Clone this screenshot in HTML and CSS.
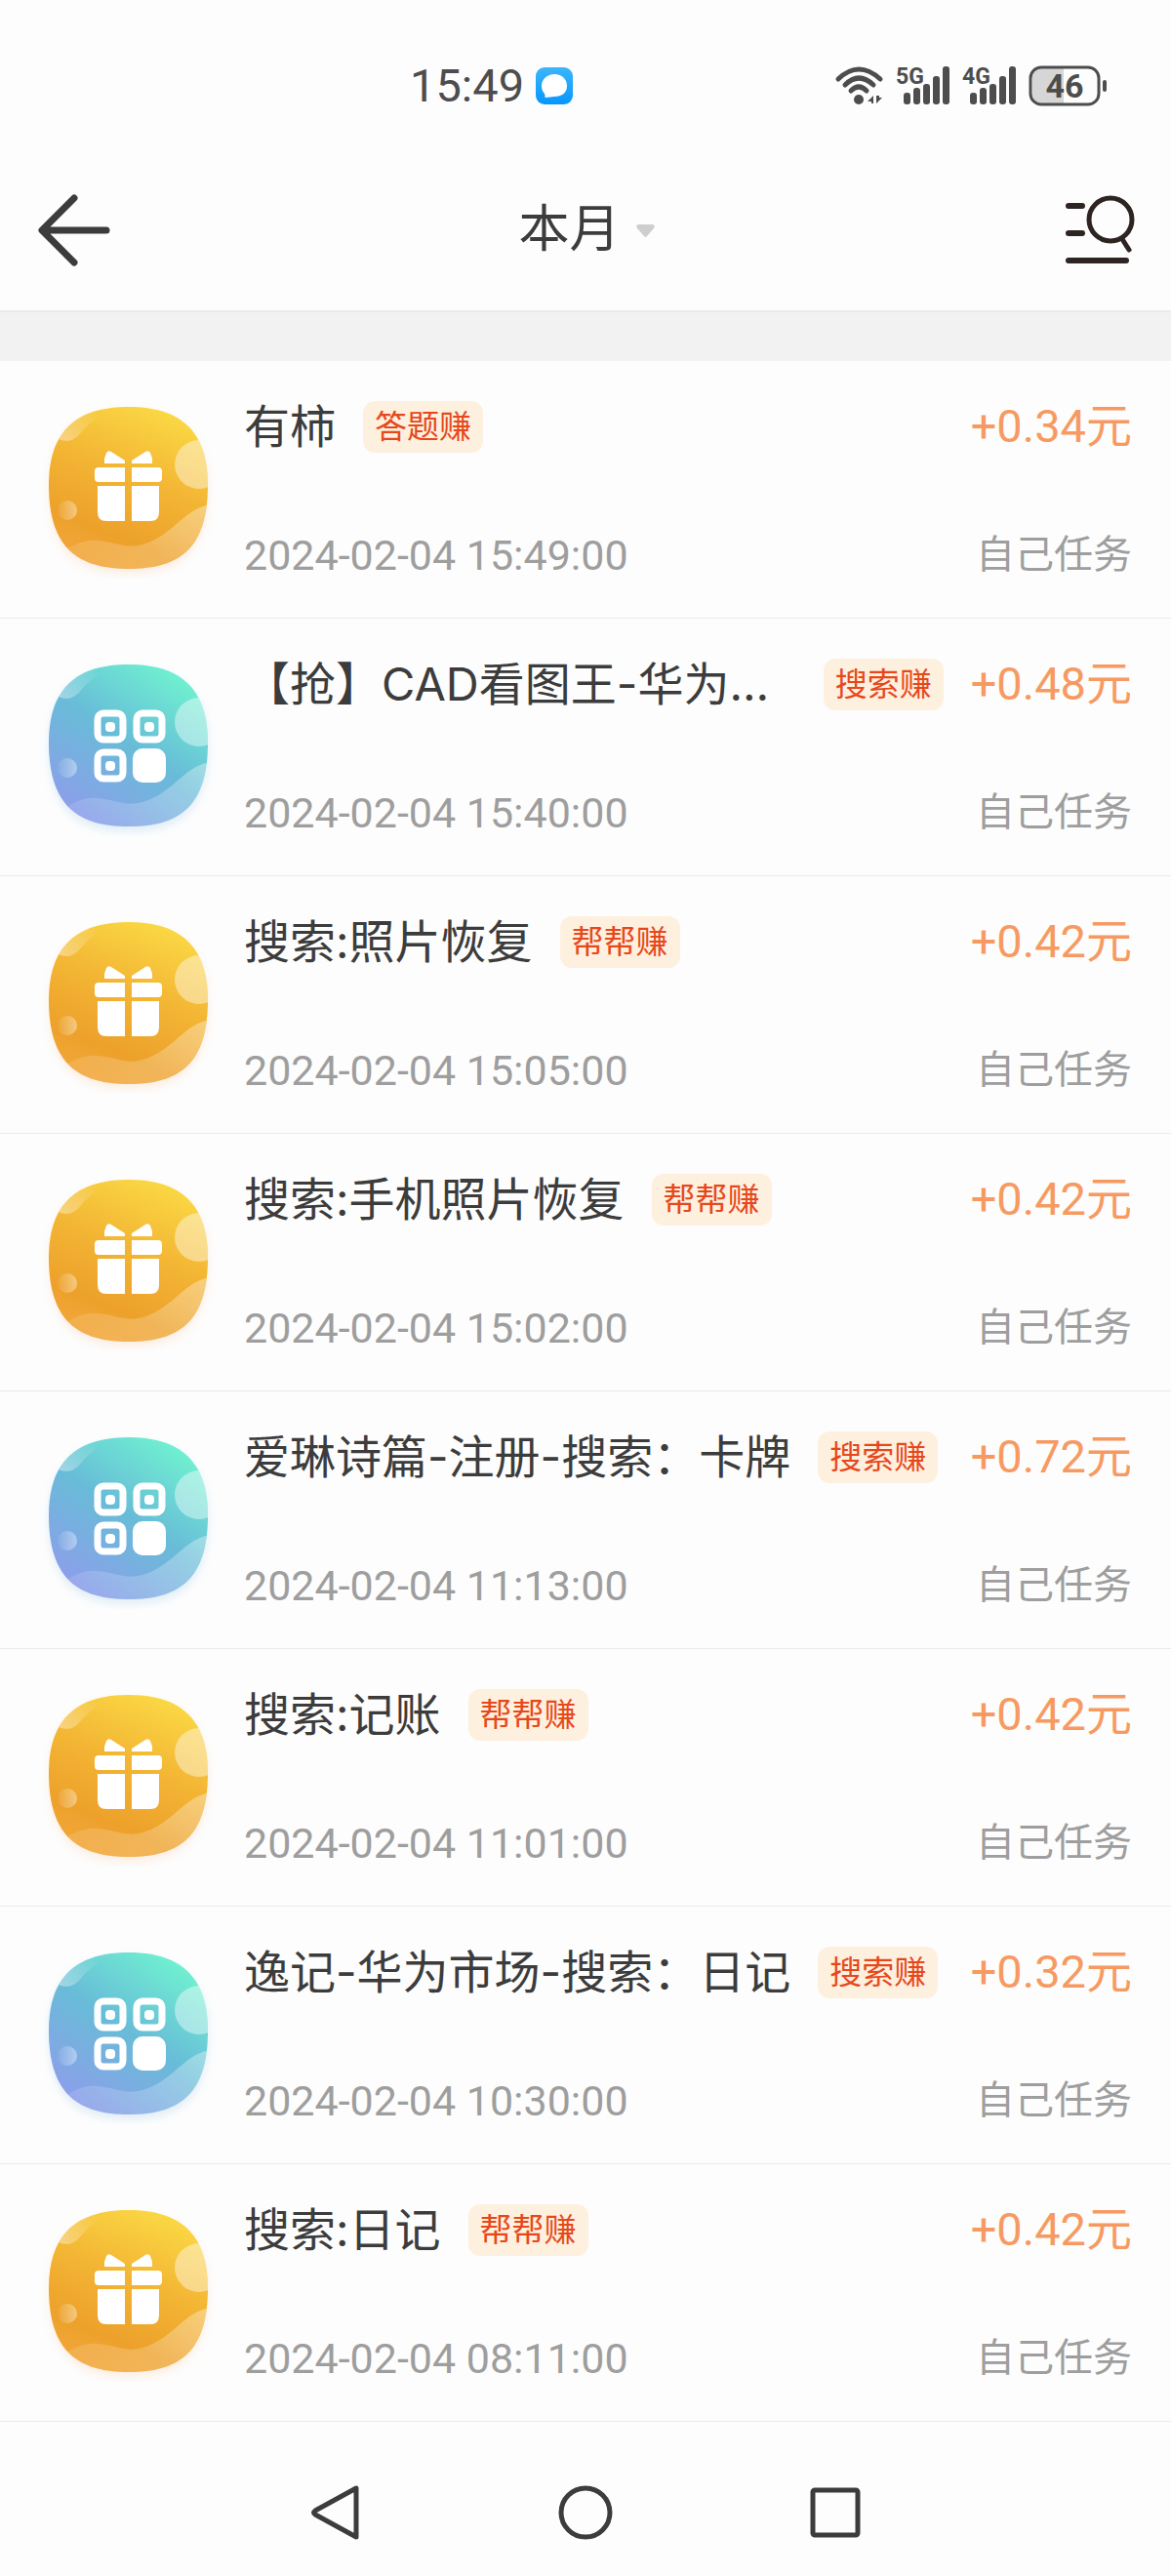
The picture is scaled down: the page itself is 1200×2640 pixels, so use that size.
FILE: index.html
```html
<!DOCTYPE html>
<html lang="zh-CN">
  <head>
  <meta charset="utf-8">
  <meta name="viewport" content="width=device-width, initial-scale=1">
  <title>本月</title>
  <link rel="stylesheet" href="styles.css">
  </head>

  <body>
  <!-- shared shapes for the task icons -->
  <svg class="defs" width="0" height="0" aria-hidden="true">
    <defs>
      <linearGradient id="gold" x1="0.75" y1="0" x2="0.35" y2="1">
        <stop offset="0" stop-color="#fbda45"/>
        <stop offset="0.45" stop-color="#f3b534"/>
        <stop offset="0.8" stop-color="#eda12b"/>
        <stop offset="1" stop-color="#f2a63a"/>
      </linearGradient>
      <linearGradient id="aqua" x1="0.75" y1="0" x2="0.15" y2="0.9">
        <stop offset="0" stop-color="#70f2d0"/>
        <stop offset="0.5" stop-color="#68bcd8"/>
        <stop offset="1" stop-color="#8c9fea"/>
      </linearGradient>
      <linearGradient id="blob" x1="0" y1="1" x2="1" y2="0.3">
        <stop offset="0" stop-color="#fff" stop-opacity="0.5"/>
        <stop offset="1" stop-color="#fff" stop-opacity="0"/>
      </linearGradient>
      <linearGradient id="dot" x1="1" y1="0.5" x2="0" y2="0.5">
        <stop offset="0" stop-color="#fff" stop-opacity="0.4"/>
        <stop offset="1" stop-color="#fff" stop-opacity="0.05"/>
      </linearGradient>
      <linearGradient id="wave" x1="1" y1="0" x2="0" y2="0.6">
        <stop offset="0" stop-color="#fff" stop-opacity="0.36"/>
        <stop offset="1" stop-color="#fff" stop-opacity="0.1"/>
      </linearGradient>
      <filter id="soft"><feGaussianBlur stdDeviation="5"/></filter>
      <path id="shape" d="M90 4C140 4 171 26 171 84C171 150 141 170 90 170C39 170 8 150 8 84C8 26 39 4 90 4Z"/>
      <clipPath id="clip"><use href="#shape"/></clipPath>
      <g id="decor" clip-path="url(#clip)">
        <path fill="url(#blob)" d="M16 36C29 43 37 36 43 28C50 20 54 20 60 12L30 0L0 20Z"/>
        <circle cx="162" cy="63" r="25" fill="#fff" fill-opacity="0.42"/>
        <circle cx="27" cy="110" r="10" fill="url(#dot)"/>
        <path fill="url(#wave)" d="M22 153C38 142 48 140 58 141C74 142 86 150 104 145C136 136 146 108 174 104V180H22Z"/>
      </g>
      <symbol id="gift" viewBox="0 0 180 180">
        <use href="#shape" y="5" fill="#f6a25c" opacity="0.16" filter="url(#soft)"/>
        <use href="#shape" fill="url(#gold)"/>
        <use href="#decor"/>
        <g fill="#fff">
          <path d="M65 62V57L67 51Q69 48 72 50L86 59V62Z"/>
          <path d="M114 62V57L112 51Q110 48 107 50L93 59V62Z"/>
          <path d="M86 66V81H59Q55 81 55 77V70Q55 66 59 66Z"/>
          <path d="M93 66V81H120Q124 81 124 77V70Q124 66 120 66Z"/>
          <path d="M86 85V121H67Q58 121 58 112V85Z"/>
          <path d="M93 85V121H112Q121 121 121 112V85Z"/>
        </g>
      </symbol>
      <symbol id="apps" viewBox="0 0 180 180">
        <use href="#shape" y="5" fill="#6aaedc" opacity="0.2" filter="url(#soft)"/>
        <use href="#shape" fill="url(#aqua)"/>
        <use href="#decor"/>
        <g fill="none" stroke="#fff" stroke-width="7">
          <rect x="58" y="54" width="26" height="27" rx="6"/>
          <rect x="98" y="54" width="26" height="27" rx="6"/>
          <rect x="58" y="94" width="26" height="27" rx="6"/>
        </g>
        <g fill="#fff">
          <rect x="94" y="90" width="34" height="35" rx="10"/>
          <rect x="66" y="63" width="10" height="10" rx="4"/>
          <rect x="106" y="63" width="10" height="10" rx="4"/>
          <rect x="66" y="103" width="10" height="10" rx="4"/>
        </g>
      </symbol>
      <g id="bars" fill="#4d4d4d">
        <rect x="8" y="28" width="7" height="12" rx="3"/>
        <rect x="18" y="23" width="7" height="17" rx="3"/>
        <rect x="28" y="19" width="7" height="21" rx="3"/>
        <rect x="38" y="11" width="7" height="29" rx="3"/>
        <rect x="48" y="1" width="7" height="39" rx="3"/>
      </g>
    </defs>
  </svg>

  <div class="status">
    <span class="clock">15:49</span>
    <svg width="38" height="38" viewBox="0 0 38 38">
      <defs><linearGradient id="msg" x1="0" y1="0" x2="0" y2="1"><stop offset="0" stop-color="#3cb5fb"/><stop offset="1" stop-color="#0597ff"/></linearGradient></defs>
      <rect width="38" height="38" rx="9" fill="url(#msg)"/>
      <path fill="#fff" d="M19 7C27 7 32 12 32 19C32 26 27 30 19 30C16 30 14 31 10 31C9 31 10 29 9 27C7 25 6 22 6 19C6 12 12 7 19 7Z"/>
    </svg>
    <div class="signals">
      <svg width="50" height="42" viewBox="0 0 50 42">
        <g fill="none" stroke="#4d4d4d" stroke-width="5" stroke-linecap="round">
          <path d="M3 14Q24 -6 46 14"/>
          <path d="M10 20Q24 6 39 20"/>
          <path d="M16 26Q24 18 32 26"/>
        </g>
        <circle cx="24" cy="35" r="5" fill="#4d4d4d"/>
        <path fill="#4d4d4d" d="M39 31V39H37V37H33ZM42 31V39L48 33H45V31Z"/>
      </svg>
      <svg class="net" width="56" height="42" viewBox="0 0 56 42"><text x="0" y="19">5G</text><use href="#bars"/></svg>
      <svg class="net" width="56" height="42" viewBox="0 0 56 42"><text x="0" y="19">4G</text><use href="#bars"/></svg>
      <svg class="battery" width="82" height="42" viewBox="0 0 82 42">
        <path fill="#d6d6d6" d="M36 3V39H13Q4 39 4 30V12Q4 3 13 3Z"/>
        <rect x="2" y="2" width="70" height="38" rx="11" fill="none" stroke="#4d4d4d" stroke-width="3"/>
        <rect x="76" y="15" width="4" height="12" rx="2" fill="#4d4d4d"/>
        <text x="37" y="33" text-anchor="middle">46</text>
      </svg>
    </div>
  </div>

  <header class="topbar">
    <button class="back" aria-label="返回">
      <svg width="74" height="74" viewBox="0 0 74 74" fill="none" stroke="#3c3c3c" stroke-width="7" stroke-linecap="round" stroke-linejoin="round">
        <path d="M37 4L4 37L37 70M5 37H70"/>
      </svg>
    </button>
    <button class="month">本月
      <svg width="19" height="13" viewBox="0 0 19 13"><path fill="#cecece" d="M2 0H17Q20 1 18 4L11 12Q9 14 8 12L1 4Q-1 1 2 0Z"/></svg>
    </button>
    <button class="filter" aria-label="筛选">
      <svg width="71" height="70" viewBox="0 0 71 70" fill="none" stroke="#2e2422" stroke-width="6" stroke-linecap="round">
        <path d="M3 10H17M3 38H17M3 66H62"/>
        <circle cx="46" cy="24" r="22" stroke-width="5"/>
        <path stroke-width="5" d="M58 44L65 55"/>
      </svg>
    </button>
  </header>

  <ul class="records">
    <li class="record">
      <svg class="icon"><use href="#gift"/></svg>
      <div class="info">
        <div class="line"><span class="name">有柿</span><span class="tag">答题赚</span><span class="amount">+0.34元</span></div>
        <div class="line sub"><time>2024-02-04 15:49:00</time><span class="source">自己任务</span></div>
      </div>
    </li>
    <li class="record">
      <svg class="icon"><use href="#apps"/></svg>
      <div class="info">
        <div class="line"><span class="name">【抢】CAD看图王-华为市场</span><span class="tag">搜索赚</span><span class="amount">+0.48元</span></div>
        <div class="line sub"><time>2024-02-04 15:40:00</time><span class="source">自己任务</span></div>
      </div>
    </li>
    <li class="record">
      <svg class="icon"><use href="#gift"/></svg>
      <div class="info">
        <div class="line"><span class="name">搜索:照片恢复</span><span class="tag">帮帮赚</span><span class="amount">+0.42元</span></div>
        <div class="line sub"><time>2024-02-04 15:05:00</time><span class="source">自己任务</span></div>
      </div>
    </li>
    <li class="record">
      <svg class="icon"><use href="#gift"/></svg>
      <div class="info">
        <div class="line"><span class="name">搜索:手机照片恢复</span><span class="tag">帮帮赚</span><span class="amount">+0.42元</span></div>
        <div class="line sub"><time>2024-02-04 15:02:00</time><span class="source">自己任务</span></div>
      </div>
    </li>
    <li class="record">
      <svg class="icon"><use href="#apps"/></svg>
      <div class="info">
        <div class="line"><span class="name">爱琳诗篇-注册-搜索：卡牌</span><span class="tag">搜索赚</span><span class="amount">+0.72元</span></div>
        <div class="line sub"><time>2024-02-04 11:13:00</time><span class="source">自己任务</span></div>
      </div>
    </li>
    <li class="record">
      <svg class="icon"><use href="#gift"/></svg>
      <div class="info">
        <div class="line"><span class="name">搜索:记账</span><span class="tag">帮帮赚</span><span class="amount">+0.42元</span></div>
        <div class="line sub"><time>2024-02-04 11:01:00</time><span class="source">自己任务</span></div>
      </div>
    </li>
    <li class="record">
      <svg class="icon"><use href="#apps"/></svg>
      <div class="info">
        <div class="line"><span class="name">逸记-华为市场-搜索：日记</span><span class="tag">搜索赚</span><span class="amount">+0.32元</span></div>
        <div class="line sub"><time>2024-02-04 10:30:00</time><span class="source">自己任务</span></div>
      </div>
    </li>
    <li class="record">
      <svg class="icon"><use href="#gift"/></svg>
      <div class="info">
        <div class="line"><span class="name">搜索:日记</span><span class="tag">帮帮赚</span><span class="amount">+0.42元</span></div>
        <div class="line sub"><time>2024-02-04 08:11:00</time><span class="source">自己任务</span></div>
      </div>
    </li>
  </ul>

  <nav class="keys">
    <button aria-label="后退">
      <svg width="56" height="56" viewBox="0 0 56 56"><path d="M49 3V53L7 30Q4 28 7 26Z"/></svg>
    </button>
    <button aria-label="主页">
      <svg width="56" height="56" viewBox="0 0 56 56"><circle cx="28" cy="28" r="25"/></svg>
    </button>
    <button aria-label="最近任务">
      <svg width="56" height="56" viewBox="0 0 56 56"><rect x="5" y="5" width="46" height="46" rx="2"/></svg>
    </button>
  </nav>
  </body>
</html>
```

FILE: styles.css
```css
body {
  margin: 0;
  background-color: #fdfdfd;
  color: #3c3c3c;
  font-family: Roboto, "Noto Sans CJK SC", sans-serif;
}

svg {
  display: block;
  flex: none;
  overflow: visible;
}

.defs {
  position: absolute;
}

button {
  margin: 0;
  padding: 0;
  border: 0;
  background: none;
  color: inherit;
  font: inherit;
}

/* status bar */
.status {
  display: flex;
  align-items: center;
  gap: 12px;
  padding: 60px 64px 38px 35%;
  line-height: 56px;
}

.clock {
  font-size: 47px;
  color: #4d4d4d;
}

.signals {
  display: flex;
  gap: 12px;
  margin-left: auto;
}

.net text {
  font-size: 23px;
  font-weight: bold;
  fill: #4d4d4d;
}

.battery text {
  font-size: 34px;
  font-weight: bold;
  fill: #4d4d4d;
}

/* title bar */
.topbar {
  display: grid;
  grid-template-columns: 1fr auto 1fr;
  align-items: center;
  height: 164px;
  padding: 0 37px 0 39px;
  border-bottom: 2px solid #ebebeb;
}

.month {
  display: flex;
  align-items: center;
  gap: 16px;
  font-size: 52px;
  line-height: 64px;
}

.filter {
  justify-self: end;
}

/* record list */
.records {
  margin: 0;
  padding: 50px 0 0;
  list-style: none;
  background: linear-gradient(#f2f2f2 50px, transparent 50px);
}

.record {
  display: flex;
  gap: 28px;
  padding: 43px 40px 40px 42px;
  border-bottom: 1px solid #ebebeb;
}

.icon {
  width: 180px;
  height: 180px;
}

.info {
  display: flex;
  flex: 1;
  flex-direction: column;
  justify-content: space-between;
  min-width: 0;
}

.line {
  display: flex;
  align-items: center;
  gap: 28px;
  height: 48px;
  line-height: 48px;
  white-space: nowrap;
}

.name {
  overflow: hidden;
  text-overflow: ellipsis;
  font-family: Inter, "Noto Sans CJK SC", sans-serif;
  font-size: 47px;
  line-height: 64px;
}

.tag {
  flex: none;
  padding: 0 12px;
  border-radius: 12px;
  background-color: #fef0de;
  color: #e6481c;
  font-size: 33px;
  line-height: 53px;
}

.amount {
  margin-left: auto;
  color: #f79a62;
  font-size: 47px;
}

.sub {
  justify-content: space-between;
  color: #9e9e9e;
  font-size: 43px;
}

.source {
  font-size: 40px;
}

/* system navigation */
.keys {
  display: grid;
  grid-template-columns: repeat(3, 1fr);
  justify-items: center;
  width: 64%;
  margin: 0 auto;
  padding: 65px 0 37px;
}

.keys svg {
  fill: none;
  stroke: #3c3c3c;
  stroke-width: 5;
  stroke-linejoin: round;
}
```
